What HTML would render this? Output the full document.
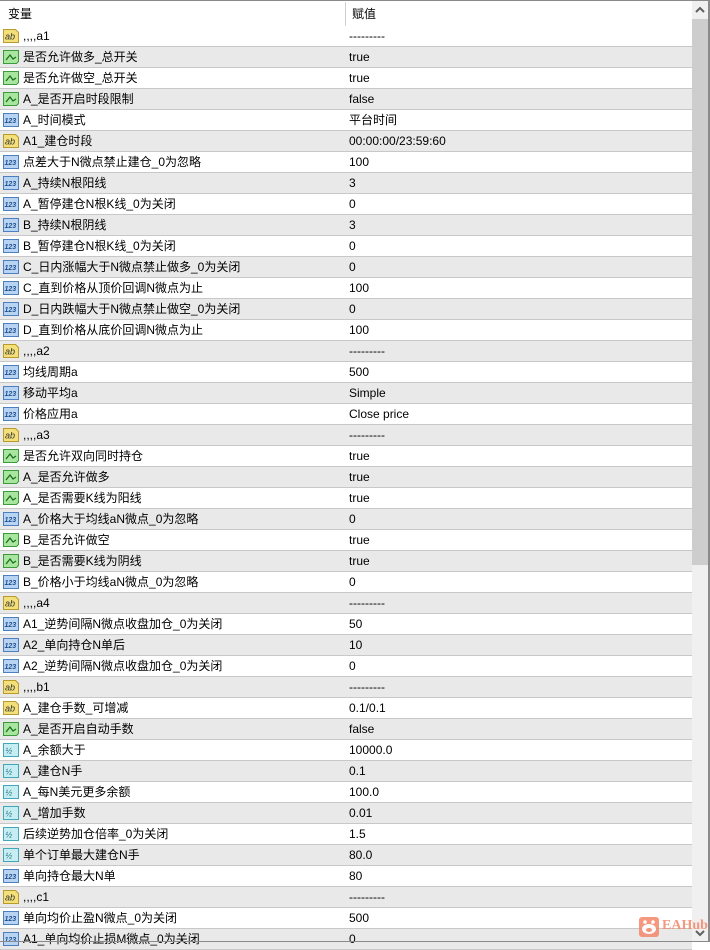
<!DOCTYPE html>
<html><head><meta charset="utf-8">
<style>
*{margin:0;padding:0;box-sizing:border-box}
body{width:710px;height:942px;overflow:hidden;background:#fff;font-family:"Liberation Sans","Noto Sans CJK SC",sans-serif;font-size:12px;color:#000;position:relative}
#frame{position:absolute;left:0;top:0;width:710px;height:942px;border-top:1px solid #8a8a8a;border-right:2px solid #8a8a8a;border-bottom:1px solid #8a8a8a}
#hdr{position:absolute;left:0;top:1px;width:692px;height:25px;background:#fff}
#hdr span{position:absolute;top:3px;line-height:20px}
#div{position:absolute;left:345px;top:2px;width:1px;height:24px;background:#d0d0d0}
.r{position:absolute;left:0;width:692px;height:21px;border-bottom:1px solid #c8c8c8;white-space:nowrap}
.g{background:#e9e9e9}
.r i{position:absolute;left:3px;top:3px;width:16px;height:14px}
.r .n,.r .v{position:absolute;top:0;height:20px;line-height:20px}
.r .n{left:23px}
.r .v{left:349px}
#sb{position:absolute;left:692px;top:1px;width:16px;height:940px;background:#f0f0f0}
#th{position:absolute;left:692px;top:19px;width:16px;height:546px;background:#cdcdcd}
</style></head><body>
<svg width="0" height="0" style="position:absolute">
<defs>
<symbol id="ab" viewBox="0 0 16 14"><path d="M0.5 0.5h12l3 3v10h-15z" fill="#f3e07a" stroke="#b89b2a"/><text x="2" y="10.5" font-size="9" font-family="Liberation Sans" fill="#333">ab</text></symbol>
<symbol id="bo" viewBox="0 0 16 14"><path d="M0.5 0.5h15v11l-2 2h-13z" fill="#a8e6a0" stroke="#3c9a3c"/><path d="M3 10l4-5 3 4 3-2" fill="none" stroke="#1d6e1d" stroke-width="1.3"/></symbol>
<symbol id="nu" viewBox="0 0 16 14"><path d="M0.5 0.5h15v13h-15z" fill="#b9d4f2" stroke="#4a7fc0"/><text x="1.5" y="10" font-size="7" font-family="Liberation Sans" font-weight="bold" fill="#1d4f8f">123</text></symbol>
<symbol id="fr" viewBox="0 0 16 14"><path d="M0.5 0.5h15v13h-15z" fill="#c6eef2" stroke="#40a8b8"/><text x="2.5" y="10.5" font-size="8" font-family="Liberation Sans" fill="#1d6e80">½</text></symbol>
</defs></svg>
<div id="hdr"><span style="left:8px">变量</span><span style="left:352px">赋值</span></div>
<div id="div"></div>

<div class="r" style="top:26px"><i><svg width="16" height="14"><use href="#ab"/></svg></i><span class="n">,,,,a1</span><span class="v">---------</span></div>
<div class="r g" style="top:47px"><i><svg width="16" height="14"><use href="#bo"/></svg></i><span class="n">是否允许做多_总开关</span><span class="v">true</span></div>
<div class="r" style="top:68px"><i><svg width="16" height="14"><use href="#bo"/></svg></i><span class="n">是否允许做空_总开关</span><span class="v">true</span></div>
<div class="r g" style="top:89px"><i><svg width="16" height="14"><use href="#bo"/></svg></i><span class="n">A_是否开启时段限制</span><span class="v">false</span></div>
<div class="r" style="top:110px"><i><svg width="16" height="14"><use href="#nu"/></svg></i><span class="n">A_时间模式</span><span class="v">平台时间</span></div>
<div class="r g" style="top:131px"><i><svg width="16" height="14"><use href="#ab"/></svg></i><span class="n">A1_建仓时段</span><span class="v">00:00:00/23:59:60</span></div>
<div class="r" style="top:152px"><i><svg width="16" height="14"><use href="#nu"/></svg></i><span class="n">点差大于N微点禁止建仓_0为忽略</span><span class="v">100</span></div>
<div class="r g" style="top:173px"><i><svg width="16" height="14"><use href="#nu"/></svg></i><span class="n">A_持续N根阳线</span><span class="v">3</span></div>
<div class="r" style="top:194px"><i><svg width="16" height="14"><use href="#nu"/></svg></i><span class="n">A_暂停建仓N根K线_0为关闭</span><span class="v">0</span></div>
<div class="r g" style="top:215px"><i><svg width="16" height="14"><use href="#nu"/></svg></i><span class="n">B_持续N根阴线</span><span class="v">3</span></div>
<div class="r" style="top:236px"><i><svg width="16" height="14"><use href="#nu"/></svg></i><span class="n">B_暂停建仓N根K线_0为关闭</span><span class="v">0</span></div>
<div class="r g" style="top:257px"><i><svg width="16" height="14"><use href="#nu"/></svg></i><span class="n">C_日内涨幅大于N微点禁止做多_0为关闭</span><span class="v">0</span></div>
<div class="r" style="top:278px"><i><svg width="16" height="14"><use href="#nu"/></svg></i><span class="n">C_直到价格从顶价回调N微点为止</span><span class="v">100</span></div>
<div class="r g" style="top:299px"><i><svg width="16" height="14"><use href="#nu"/></svg></i><span class="n">D_日内跌幅大于N微点禁止做空_0为关闭</span><span class="v">0</span></div>
<div class="r" style="top:320px"><i><svg width="16" height="14"><use href="#nu"/></svg></i><span class="n">D_直到价格从底价回调N微点为止</span><span class="v">100</span></div>
<div class="r g" style="top:341px"><i><svg width="16" height="14"><use href="#ab"/></svg></i><span class="n">,,,,a2</span><span class="v">---------</span></div>
<div class="r" style="top:362px"><i><svg width="16" height="14"><use href="#nu"/></svg></i><span class="n">均线周期a</span><span class="v">500</span></div>
<div class="r g" style="top:383px"><i><svg width="16" height="14"><use href="#nu"/></svg></i><span class="n">移动平均a</span><span class="v">Simple</span></div>
<div class="r" style="top:404px"><i><svg width="16" height="14"><use href="#nu"/></svg></i><span class="n">价格应用a</span><span class="v">Close price</span></div>
<div class="r g" style="top:425px"><i><svg width="16" height="14"><use href="#ab"/></svg></i><span class="n">,,,,a3</span><span class="v">---------</span></div>
<div class="r" style="top:446px"><i><svg width="16" height="14"><use href="#bo"/></svg></i><span class="n">是否允许双向同时持仓</span><span class="v">true</span></div>
<div class="r g" style="top:467px"><i><svg width="16" height="14"><use href="#bo"/></svg></i><span class="n">A_是否允许做多</span><span class="v">true</span></div>
<div class="r" style="top:488px"><i><svg width="16" height="14"><use href="#bo"/></svg></i><span class="n">A_是否需要K线为阳线</span><span class="v">true</span></div>
<div class="r g" style="top:509px"><i><svg width="16" height="14"><use href="#nu"/></svg></i><span class="n">A_价格大于均线aN微点_0为忽略</span><span class="v">0</span></div>
<div class="r" style="top:530px"><i><svg width="16" height="14"><use href="#bo"/></svg></i><span class="n">B_是否允许做空</span><span class="v">true</span></div>
<div class="r g" style="top:551px"><i><svg width="16" height="14"><use href="#bo"/></svg></i><span class="n">B_是否需要K线为阴线</span><span class="v">true</span></div>
<div class="r" style="top:572px"><i><svg width="16" height="14"><use href="#nu"/></svg></i><span class="n">B_价格小于均线aN微点_0为忽略</span><span class="v">0</span></div>
<div class="r g" style="top:593px"><i><svg width="16" height="14"><use href="#ab"/></svg></i><span class="n">,,,,a4</span><span class="v">---------</span></div>
<div class="r" style="top:614px"><i><svg width="16" height="14"><use href="#nu"/></svg></i><span class="n">A1_逆势间隔N微点收盘加仓_0为关闭</span><span class="v">50</span></div>
<div class="r g" style="top:635px"><i><svg width="16" height="14"><use href="#nu"/></svg></i><span class="n">A2_单向持仓N单后</span><span class="v">10</span></div>
<div class="r" style="top:656px"><i><svg width="16" height="14"><use href="#nu"/></svg></i><span class="n">A2_逆势间隔N微点收盘加仓_0为关闭</span><span class="v">0</span></div>
<div class="r g" style="top:677px"><i><svg width="16" height="14"><use href="#ab"/></svg></i><span class="n">,,,,b1</span><span class="v">---------</span></div>
<div class="r" style="top:698px"><i><svg width="16" height="14"><use href="#ab"/></svg></i><span class="n">A_建仓手数_可增减</span><span class="v">0.1/0.1</span></div>
<div class="r g" style="top:719px"><i><svg width="16" height="14"><use href="#bo"/></svg></i><span class="n">A_是否开启自动手数</span><span class="v">false</span></div>
<div class="r" style="top:740px"><i><svg width="16" height="14"><use href="#fr"/></svg></i><span class="n">A_余额大于</span><span class="v">10000.0</span></div>
<div class="r g" style="top:761px"><i><svg width="16" height="14"><use href="#fr"/></svg></i><span class="n">A_建仓N手</span><span class="v">0.1</span></div>
<div class="r" style="top:782px"><i><svg width="16" height="14"><use href="#fr"/></svg></i><span class="n">A_每N美元更多余额</span><span class="v">100.0</span></div>
<div class="r g" style="top:803px"><i><svg width="16" height="14"><use href="#fr"/></svg></i><span class="n">A_增加手数</span><span class="v">0.01</span></div>
<div class="r" style="top:824px"><i><svg width="16" height="14"><use href="#fr"/></svg></i><span class="n">后续逆势加仓倍率_0为关闭</span><span class="v">1.5</span></div>
<div class="r g" style="top:845px"><i><svg width="16" height="14"><use href="#fr"/></svg></i><span class="n">单个订单最大建仓N手</span><span class="v">80.0</span></div>
<div class="r" style="top:866px"><i><svg width="16" height="14"><use href="#nu"/></svg></i><span class="n">单向持仓最大N单</span><span class="v">80</span></div>
<div class="r g" style="top:887px"><i><svg width="16" height="14"><use href="#ab"/></svg></i><span class="n">,,,,c1</span><span class="v">---------</span></div>
<div class="r" style="top:908px"><i><svg width="16" height="14"><use href="#nu"/></svg></i><span class="n">单向均价止盈N微点_0为关闭</span><span class="v">500</span></div>
<div class="r g" style="top:929px"><i><svg width="16" height="14"><use href="#nu"/></svg></i><span class="n">A1_单向均价止损M微点_0为关闭</span><span class="v">0</span></div>

<div id="sb"></div>
<div id="th"></div>
<svg style="position:absolute;left:694px;top:5px" width="12" height="10"><path d="M2 7l4-4 4 4" fill="none" stroke="#606060" stroke-width="2"/></svg>
<svg style="position:absolute;left:694px;top:928px" width="12" height="10"><path d="M2 3l4 4 4-4" fill="none" stroke="#606060" stroke-width="2"/></svg>
<div id="frame"></div>
<svg style="position:absolute;left:639px;top:917px;opacity:.85" width="20" height="20" viewBox="0 0 20 20"><rect width="20" height="20" rx="3" fill="#f4876a"/><circle cx="6" cy="5" r="1.8" fill="#fff"/><circle cx="14" cy="5" r="1.8" fill="#fff"/><ellipse cx="10" cy="12" rx="7" ry="5" fill="#fff"/><ellipse cx="10" cy="13" rx="3" ry="2" fill="#f4876a"/></svg>
<div style="position:absolute;left:662px;top:917px;line-height:18px;font-family:'Liberation Serif',serif;font-weight:bold;font-size:14px;color:#f4876a;opacity:.85">EAHub</div>
</body></html>
